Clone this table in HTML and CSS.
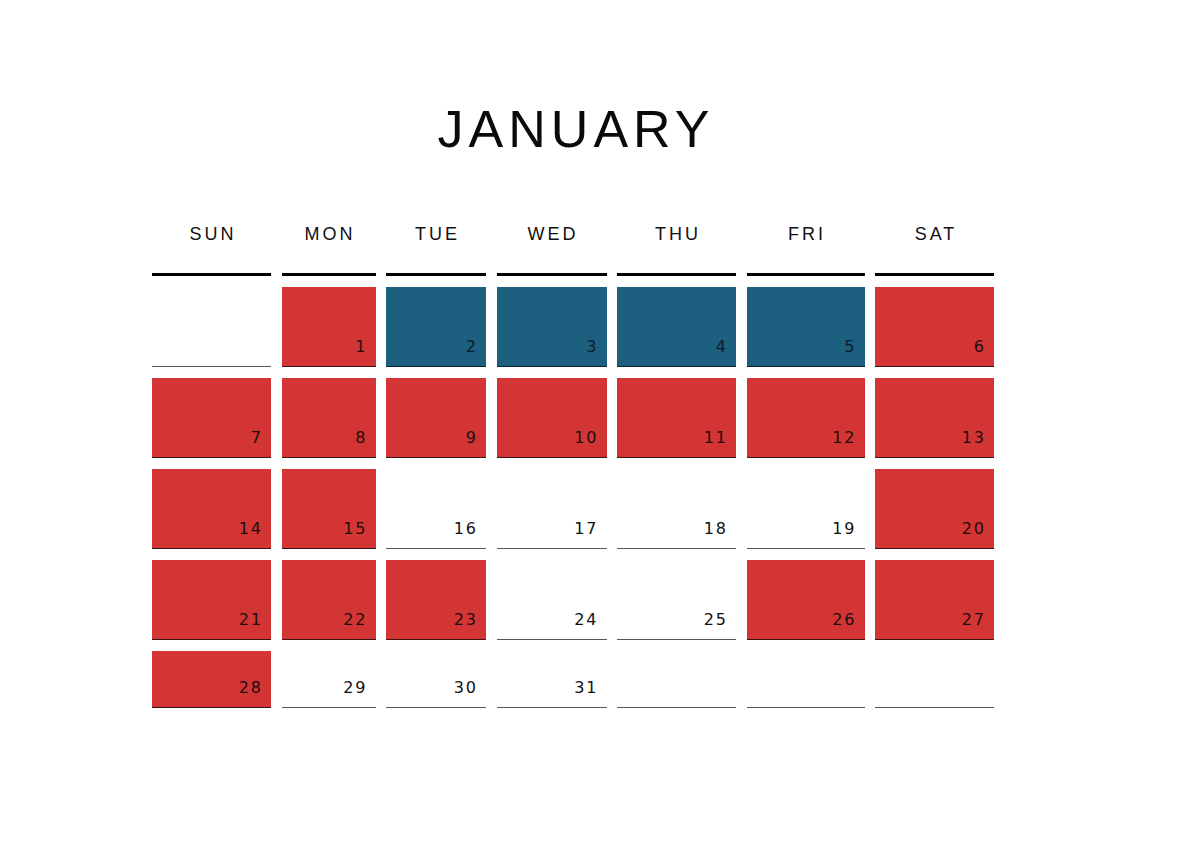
FILE: index.html
```html
<!DOCTYPE html>
<html lang="en">
<head>
<meta charset="utf-8">
<title>January</title>
<link rel="stylesheet" href="styles.css">
</head>
<body>
<main class="calendar">
  <h1 class="title">JANUARY</h1>
  <div class="grid">
    <div class="dow">SUN</div>
    <div class="dow">MON</div>
    <div class="dow">TUE</div>
    <div class="dow">WED</div>
    <div class="dow">THU</div>
    <div class="dow">FRI</div>
    <div class="dow">SAT</div>

    <div class="day"></div>
    <div class="day red"><span>1</span></div>
    <div class="day blue"><span>2</span></div>
    <div class="day blue"><span>3</span></div>
    <div class="day blue"><span>4</span></div>
    <div class="day blue"><span>5</span></div>
    <div class="day red"><span>6</span></div>

    <div class="day red"><span>7</span></div>
    <div class="day red"><span>8</span></div>
    <div class="day red"><span>9</span></div>
    <div class="day red"><span>10</span></div>
    <div class="day red"><span>11</span></div>
    <div class="day red"><span>12</span></div>
    <div class="day red"><span>13</span></div>

    <div class="day red"><span>14</span></div>
    <div class="day red"><span>15</span></div>
    <div class="day"><span>16</span></div>
    <div class="day"><span>17</span></div>
    <div class="day"><span>18</span></div>
    <div class="day"><span>19</span></div>
    <div class="day red"><span>20</span></div>

    <div class="day red"><span>21</span></div>
    <div class="day red"><span>22</span></div>
    <div class="day red"><span>23</span></div>
    <div class="day"><span>24</span></div>
    <div class="day"><span>25</span></div>
    <div class="day red"><span>26</span></div>
    <div class="day red"><span>27</span></div>

    <div class="day red"><span>28</span></div>
    <div class="day"><span>29</span></div>
    <div class="day"><span>30</span></div>
    <div class="day"><span>31</span></div>
    <div class="day"></div>
    <div class="day"></div>
    <div class="day"></div>
  </div>
</main>
</body>
</html>
```

FILE: styles.css
```css
* { box-sizing: border-box; }

html, body {
  margin: 0;
  padding: 0;
  background: #ffffff;
}

body {
  font-family: "Liberation Sans", Arial, sans-serif;
  color: #111111;
}

.calendar {
  width: 843px;
  margin-left: 152px;
  padding-top: 103px;
}

.title {
  margin: 0 0 70px 0;
  padding-left: 5px;
  font-size: 52px;
  line-height: 52px;
  font-weight: 400;
  letter-spacing: 5px;
  text-align: center;
  color: #0a0a0a;
}

.grid {
  display: grid;
  grid-template-columns: 119px 94px 100px 110px 119px 118px 119px;
  grid-template-rows: auto repeat(4, 80px) 57px;
  column-gap: 10.5px;
  row-gap: 11px;
}

.dow {
  font-size: 18px;
  line-height: 18px;
  letter-spacing: 3px;
  padding-left: 3px;
  padding-bottom: 30px;
  text-align: center;
  border-bottom: 3px solid #000000;
  color: #111111;
}

.day {
  display: flex;
  align-items: flex-end;
  justify-content: flex-end;
  padding: 0 8px 11px 0;
  border-bottom: 1px solid #555555;
  font-family: "DejaVu Sans", "Liberation Sans", sans-serif;
  font-size: 16px;
  line-height: 17px;
  letter-spacing: 2px;
  color: #111111;
}

.day.red {
  background: #d33535;
  border-bottom-color: #3a1414;
  color: #1f0d0d;
}

.day.blue {
  background: #1c5f7f;
  border-bottom-color: #0d2430;
  color: #0b1c26;
}
```
